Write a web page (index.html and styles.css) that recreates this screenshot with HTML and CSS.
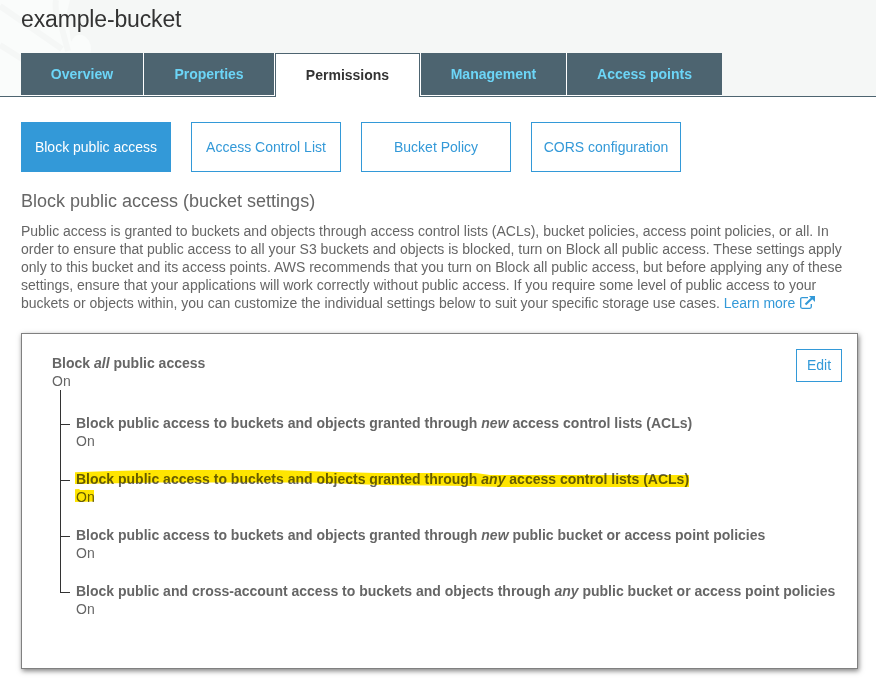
FILE: index.html
```html
<!DOCTYPE html>
<html lang="en">
<head>
<meta charset="utf-8">
<title>example-bucket</title>
<link rel="stylesheet" href="styles.css">
</head>
<body>
<header class="header">
  <svg class="watermark" width="100" height="96" viewBox="0 0 100 96" aria-hidden="true">
    <path d="M0 0H70L67 12 71 42Q75 33 82 35 91 38 91 50L88 62V96H0Z" fill="#fafcfb"/>
    <path d="M0 6L62 49M0 45L30 64M56 0Q54 12 61 25L68 51" fill="none" stroke="#f5f7f6" stroke-width="6"/>
  </svg>
  <h1 class="title">example-bucket</h1>
  <nav class="tabs">
    <a class="tab overview">Overview</a>
    <a class="tab properties">Properties</a>
    <a class="tab active">Permissions</a>
    <a class="tab management">Management</a>
    <a class="tab points">Access points</a>
  </nav>
</header>
<main class="main">
  <div class="subnav">
    <a class="button selected">Block public access</a>
    <a class="button">Access Control List</a>
    <a class="button">Bucket Policy</a>
    <a class="button">CORS configuration</a>
  </div>
  <h2 class="heading">Block public access (bucket settings)</h2>
  <p class="intro">Public access is granted to buckets and objects through access control lists (ACLs), bucket policies, access point policies, or all. In<br>order to ensure that public access to all your S3 buckets and objects is blocked, turn on Block all public access. These settings apply<br>only to this bucket and its access points. AWS recommends that you turn on Block all public access, but before applying any of these<br>settings, ensure that your applications will work correctly without public access. If you require some level of public access to your<br>buckets or objects within, you can customize the individual settings below to suit your specific storage use cases. <a class="link">Learn more <svg class="external" width="15" height="13" viewBox="0 0 15 13" aria-hidden="true"><path d="M8 1.6H2.2Q.7 1.6.7 3.1V10.8Q.7 12.3 2.2 12.3H9.8Q11.3 12.3 11.3 10.8V8" fill="none" stroke="currentColor" stroke-width="1.3"/><path d="M5.5 8.5L12.5 1.8" stroke="currentColor" stroke-width="2.2"/><path d="M9 0H15V6Z" fill="currentColor"/></svg></a></p>
  <section class="panel">
    <div class="settings">
      <div class="label">Block <em>all</em> public access</div>
      <div>On</div>
      <ul class="tree">
        <li class="item"><div class="label">Block public access to buckets and objects granted through <em>new</em> access control lists (ACLs)</div><div>On</div></li>
        <li class="item"><div class="label">Block public access to buckets and objects granted through <em>any</em> access control lists (ACLs)</div><div>On</div>
          <svg class="marker" width="615" height="34" viewBox="75 469 615 34" aria-hidden="true"><path d="M75 472.3L112 471 155 470H275L320 471.5 376 473H476L490 475H689V487H500L470 486 380 485 310 482.5H160L75 484ZM75 489.3L79 489 80 490H94V501.5L75 502Z" fill="#ffe500"/></svg>
        </li>
        <li class="item"><div class="label">Block public access to buckets and objects granted through <em>new</em> public bucket or access point policies</div><div>On</div></li>
        <li class="item"><div class="label">Block public and cross-account access to buckets and objects through <em>any</em> public bucket or access point policies</div><div>On</div></li>
      </ul>
    </div>
    <a class="edit">Edit</a>
  </section>
</main>
</body>
</html>
```

FILE: styles.css
```css
* { box-sizing: border-box; }
body {
  margin: 0;
  height: 687px;
  overflow: hidden;
  background: #fff;
  color: #666;
  font: 14px/18px "Liberation Sans", Arial, sans-serif;
}
.header {
  position: relative;
  height: 97px;
  padding-left: 21px;
  background: #f5f7f6;
  border-bottom: 1px solid #4d6470;
}
.watermark { position: absolute; left: 0; top: 0; }
.title {
  position: relative;
  margin: 0;
  height: 53px;
  padding-top: 5px;
  color: #333;
  font-size: 23px;
  font-weight: 400;
  letter-spacing: -.15px;
  line-height: 28px;
}
.tabs { position: relative; display: flex; height: 44px; }
.tab {
  height: 43px;
  border-right: 1px solid #fff;
  border-bottom: 1px solid #fff;
  background: #4d6470;
  color: #6cd5f7;
  font-weight: 700;
  line-height: 42px;
  text-align: center;
}
.overview { width: 123px; }
.properties { width: 131px; }
.active {
  width: 145px;
  height: 44px;
  border: 1px solid #4d6470;
  border-bottom: 0;
  background: #fff;
  color: #333;
}
.management { width: 147px; border-left: 1px solid #fff; }
.points { width: 155px; border-right: 0; }
.main { padding: 25px 18px 0 21px; }
.subnav { display: flex; gap: 20px; }
.button {
  width: 150px;
  height: 50px;
  border: 1px solid #3399d8;
  color: #3399d8;
  line-height: 48px;
  text-align: center;
}
.selected { background: #3399d8; color: #fff; }
.heading {
  margin: 18px 0 10px;
  font-size: 18px;
  font-weight: 400;
  line-height: 22px;
}
.intro { margin: 0 0 21px; white-space: nowrap; }
.link { color: #3399d8; }
.external { margin-left: 1px; vertical-align: -1px; }
.panel {
  position: relative;
  display: flex;
  justify-content: space-between;
  width: 837px;
  height: 336px;
  padding: 20px 15px 0 30px;
  border: 1px solid #808080;
  box-shadow: 1px 2px 5px rgba(0, 0, 0, .5);
}
.settings { white-space: nowrap; width: 0; }
.label { font-weight: 700; }
.tree { margin: 0 0 0 8px; padding: 24px 0 0; list-style: none; position: relative; width: 780px; }
.tree::before {
  content: "";
  position: absolute;
  left: 0;
  top: 0;
  width: 1px;
  height: 203px;
  background: #333;
}
.item { position: relative; height: 56px; padding-left: 16px; }
.item::before {
  content: "";
  position: absolute;
  left: 0;
  top: 10px;
  width: 10px;
  height: 1px;
  background: #333;
}
.marker { position: absolute; left: 15px; top: -1px; mix-blend-mode: multiply; }
.edit {
  width: 46px;
  height: 33px;
  margin-top: -5px;
  border: 1px solid #3399d8;
  color: #3399d8;
  line-height: 31px;
  text-align: center;
}
```
